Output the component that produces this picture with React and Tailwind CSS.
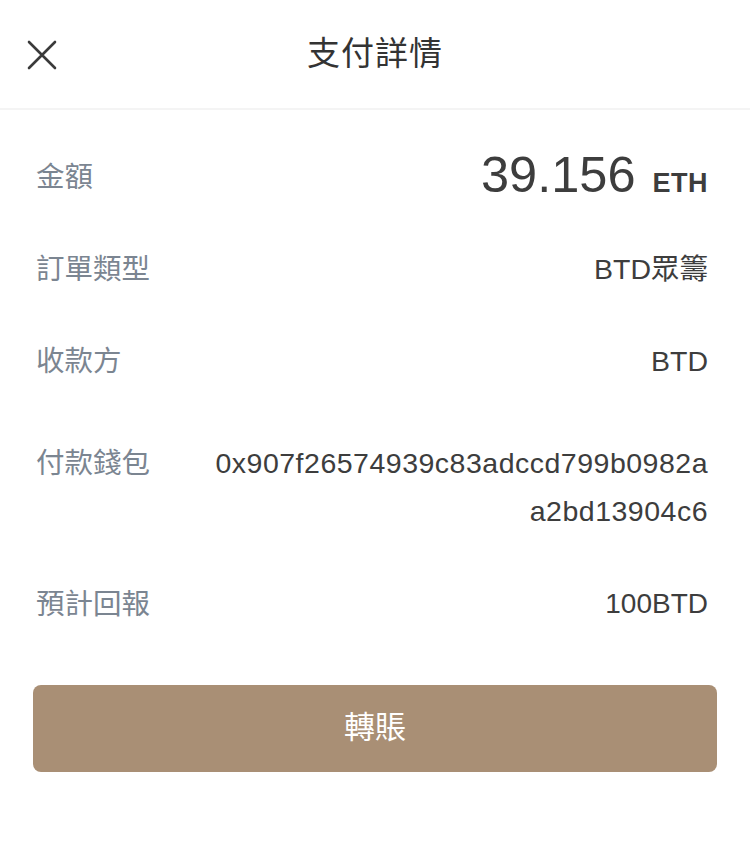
import React from 'react'

const font = { fontFamily: '"Liberation Sans", "Noto Sans CJK TC", sans-serif' }

function Row({ label, children, className = '' }) {
  return (
    <div className={`flex justify-between ${className}`}>
      <span className="text-[28.5px] text-[#7b8591] shrink-0">{label}</span>
      {children}
    </div>
  )
}

export default function App() {
  return (
    <div className="w-[750px] h-[844px] bg-white" style={font}>
      <div className="relative h-[110px] flex items-center justify-center border-b-2 border-[#f4f4f4]">
        <button className="absolute left-[27px] top-[40px] w-[30px] h-[30px]">
          <svg viewBox="0 0 30 30" className="w-[30px] h-[30px]">
            <path d="M2 2 L28 28 M28 2 L2 28" stroke="#3a3a3a" strokeWidth="2.6" strokeLinecap="round" />
          </svg>
        </button>
        <h1 className="text-[33px] text-[#333] tracking-[1px]">支付詳情</h1>
      </div>

      <div className="pl-9 pr-[42px] pt-[21px]">
        <Row label="金額" className="h-[92px] items-center">
          <div className="flex items-baseline text-[#3d3d3d]">
            <span className="text-[50.5px] leading-none">39.156</span>
            <span className="ml-[17px] text-[27px] font-bold tracking-[0.5px]">ETH</span>
          </div>
        </Row>
        <Row label="訂單類型" className="h-[92px] items-center">
          <span className="text-[28.5px] text-[#3d3d3d]">BTD眾籌</span>
        </Row>
        <Row label="收款方" className="h-[92px] items-center">
          <span className="text-[28.5px] text-[#3d3d3d]">BTD</span>
        </Row>
        <Row label="付款錢包" className="pt-[32px] pb-[23px] items-start leading-[48px]">
          <div className="flex flex-col items-end text-[28.5px] text-[#3d3d3d] leading-[48px] tracking-[0.5px]">
            <span>0x907f26574939c83adccd799b0982a</span>
            <span>a2bd13904c6</span>
          </div>
        </Row>
        <Row label="預計回報" className="h-[92px] items-center">
          <span className="text-[28px] text-[#3d3d3d]">100BTD</span>
        </Row>
      </div>

      <div className="px-[33px] mt-[35px]">
        <button className="w-full h-[87px] rounded-[8px] bg-[#a98f75] text-white text-[31px]">
          轉賬
        </button>
      </div>
    </div>
  )
}
